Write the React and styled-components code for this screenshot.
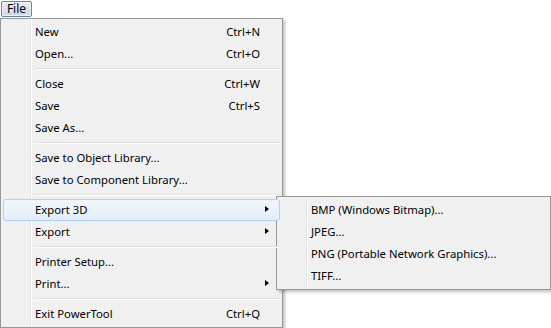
import React from "react";
import styled, { createGlobalStyle } from "styled-components";

const Global = createGlobalStyle`
  html, body { margin: 0; padding: 0; background: #ffffff; }
  body { font-family: "Segoe UI", "Noto Sans", "Open Sans", sans-serif; font-size: 11.3px; color: #000; }
`;

const Page = styled.div`
  position: relative;
  width: 551px;
  height: 328px;
  overflow: hidden;
  background: #fff;
`;

const MenuBar = styled.div`
  display: flex;
  padding: 1px 0 0 1px;
  height: 17px;
`;

const BarButton = styled.div`
  box-sizing: border-box;
  width: 31px;
  height: 16px;
  border: 1px solid #6d7f99;
  border-radius: 2px;
  background: linear-gradient(#e6eef8, #c9d8ec);
  display: flex;
  align-items: center;
  justify-content: center;
  font-size: 12px;
  line-height: 14px;
  box-shadow: inset 0 0 0 1px rgba(255,255,255,0.6);
`;

const Menu = styled.div`
  position: absolute;
  left: ${(p) => p.$left}px;
  top: ${(p) => p.$top}px;
  width: ${(p) => p.$width}px;
  box-sizing: border-box;
  border: 1px solid #979797;
  background: #f0f0f0;
  padding: 2px 2px;
  box-shadow: 2px 2px 3px rgba(0,0,0,0.25);
  display: flex;
  flex-direction: column;
  &::before {
    content: "";
    position: absolute;
    left: 29px;
    top: 1px;
    bottom: 1px;
    width: 1px;
    background: #e2e3e3;
    box-shadow: 1px 0 0 #ffffff;
  }
`;

const Item = styled.div`
  position: relative;
  box-sizing: border-box;
  height: 22px;
  display: flex;
  align-items: center;
  padding: 0 19px 2px 31px;
  border: 1px solid ${(p) => (p.$active ? "#aecff7" : "transparent")};
  border-radius: 3px;
  background: ${(p) =>
    p.$active ? "linear-gradient(#f1f6fd, #e3edf9)" : "transparent"};
  z-index: 1;
`;

const Label = styled.span`
  flex: 1;
  white-space: nowrap;
`;

const Shortcut = styled.span`
  white-space: nowrap;
`;

const Arrow = styled.span`
  position: absolute;
  right: 10px;
  top: 6px;
  width: 0;
  height: 0;
  border-top: 3.5px solid transparent;
  border-bottom: 3.5px solid transparent;
  border-left: 4px solid #000;
`;

const Separator = styled.div`
  position: relative;
  margin: 3px 0 3px 31px;
  height: 1px;
  background: #e0e0e0;
  border-bottom: 1px solid #ffffff;
  z-index: 1;
`;

const main = [
  { label: "New", sc: "Ctrl+N" },
  { label: "Open...", sc: "Ctrl+O" },
  "sep",
  { label: "Close", sc: "Ctrl+W" },
  { label: "Save", sc: "Ctrl+S" },
  { label: "Save As..." },
  "sep",
  { label: "Save to Object Library..." },
  { label: "Save to Component Library..." },
  "sep",
  { label: "Export 3D", sub: true, active: true },
  { label: "Export", sub: true },
  "sep",
  { label: "Printer Setup..." },
  { label: "Print...", sub: true },
  "sep",
  { label: "Exit PowerTool", sc: "Ctrl+Q" },
];

const sub = [
  "BMP (Windows Bitmap)...",
  "JPEG...",
  "PNG (Portable Network Graphics)...",
  "TIFF...",
];

export default function App() {
  return (
    <Page>
      <Global />
      <MenuBar>
        <BarButton>File</BarButton>
      </MenuBar>
      <Menu $left={0} $top={18} $width={283}>
        {main.map((it, i) =>
          it === "sep" ? (
            <Separator key={i} />
          ) : (
            <Item key={i} $active={it.active}>
              <Label>{it.label}</Label>
              {it.sc && <Shortcut>{it.sc}</Shortcut>}
              {it.sub && <Arrow />}
            </Item>
          )
        )}
      </Menu>
      <Menu $left={276} $top={196} $width={275}>
        {sub.map((s) => (
          <Item key={s}>
            <Label>{s}</Label>
          </Item>
        ))}
      </Menu>
    </Page>
  );
}
